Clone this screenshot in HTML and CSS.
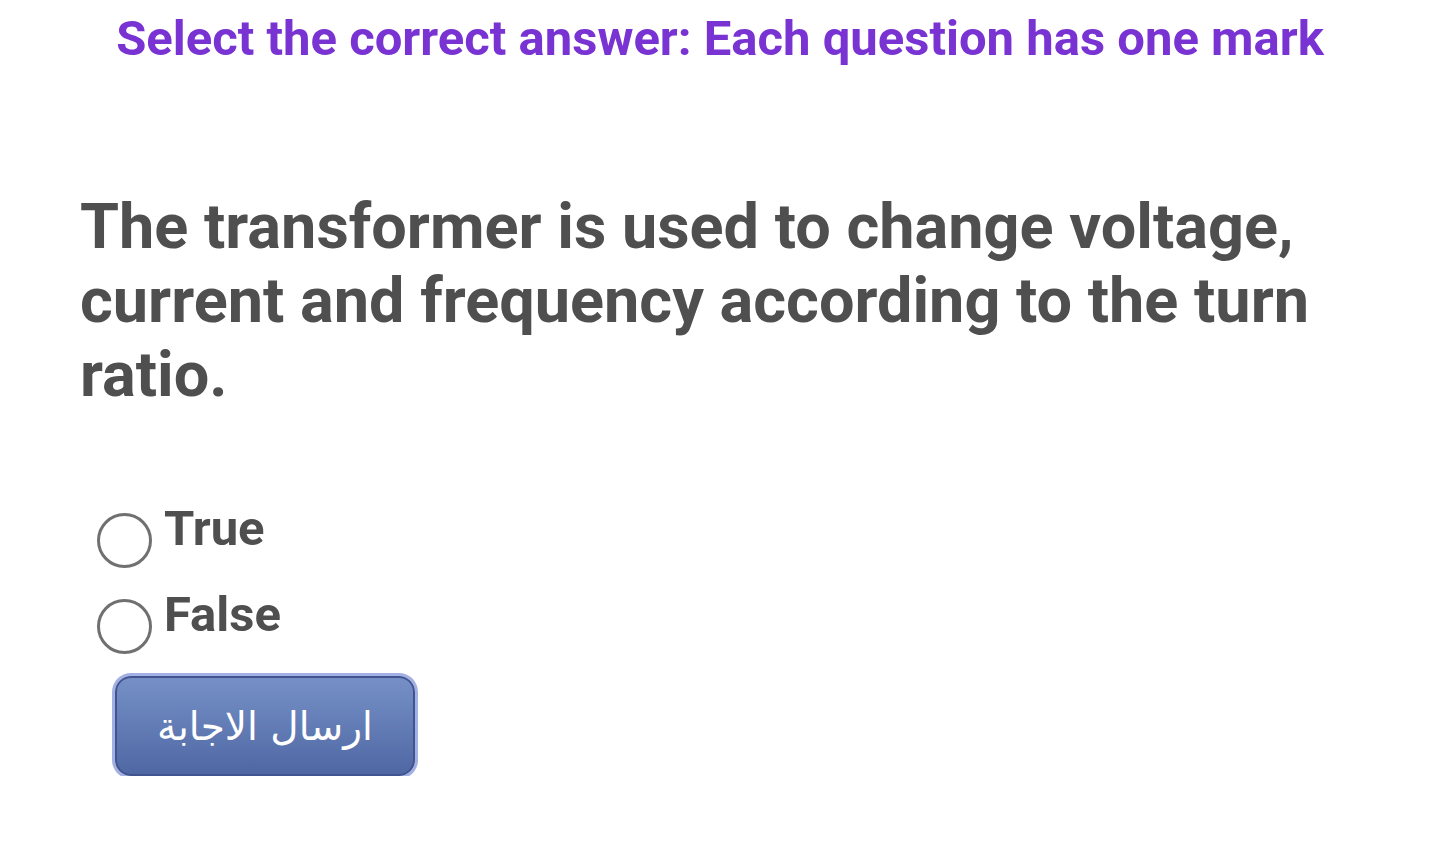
FILE: index.html
```html
<!DOCTYPE html>
<html>
<head>
  <meta charset="UTF-8">
  <title>Quiz</title>
  <link rel="stylesheet" href="styles.css">
</head>
<body>
<h2 class="title">Select the correct answer: Each question has one mark</h2>
<div class="question">The transformer is used to change voltage, current and frequency according to the turn ratio.</div>
<div class="answers">
  <label class="option"><input type="radio" name="q1"><span class="circle"></span><span class="text">True</span></label>
  <label class="option"><input type="radio" name="q1"><span class="circle"></span><span class="text">False</span></label>
</div>
<button class="send">ارسال الاجابة</button>
</body>
</html>
```
FILE: styles.css
```css
body {
  margin: 0;
  background: #fff;
  font-family: Roboto, "Liberation Sans", sans-serif;
  padding: 0 80px;
}

.title {
  margin: 0;
  padding-top: 11px;
  text-align: center;
  color: #7833d2;
  font-size: 49px;
  font-weight: bold;
  line-height: 56px;
}

.question {
  margin-top: 123px;
  color: #4f4f4f;
  font-size: 63px;
  font-weight: bold;
  line-height: 74px;
}

.answers {
  margin-top: 89px;
  margin-left: 17px;
}

.option {
  display: flex;
  align-items: flex-start;
  gap: 12px;
  height: 86px;
  color: #4f4f4f;
  font-size: 49px;
  font-weight: bold;
}

.option input { display: none; }

.circle {
  width: 49px;
  height: 49px;
  border: 3px solid #707070;
  border-radius: 50%;
  margin-top: 12px;
}

.text {
  line-height: 56px;
}

.send {
  margin: 3px 0 0 35px;
  width: 300px;
  height: 100px;
  border: 2px solid #40548f;
  box-shadow: 0 0 0 3px #a2b0e4;
  border-radius: 16px;
  background: linear-gradient(#7690c7, #4f68a4);
  color: #fff;
  font-family: "DejaVu Sans", sans-serif;
  font-size: 39px;
}
```
